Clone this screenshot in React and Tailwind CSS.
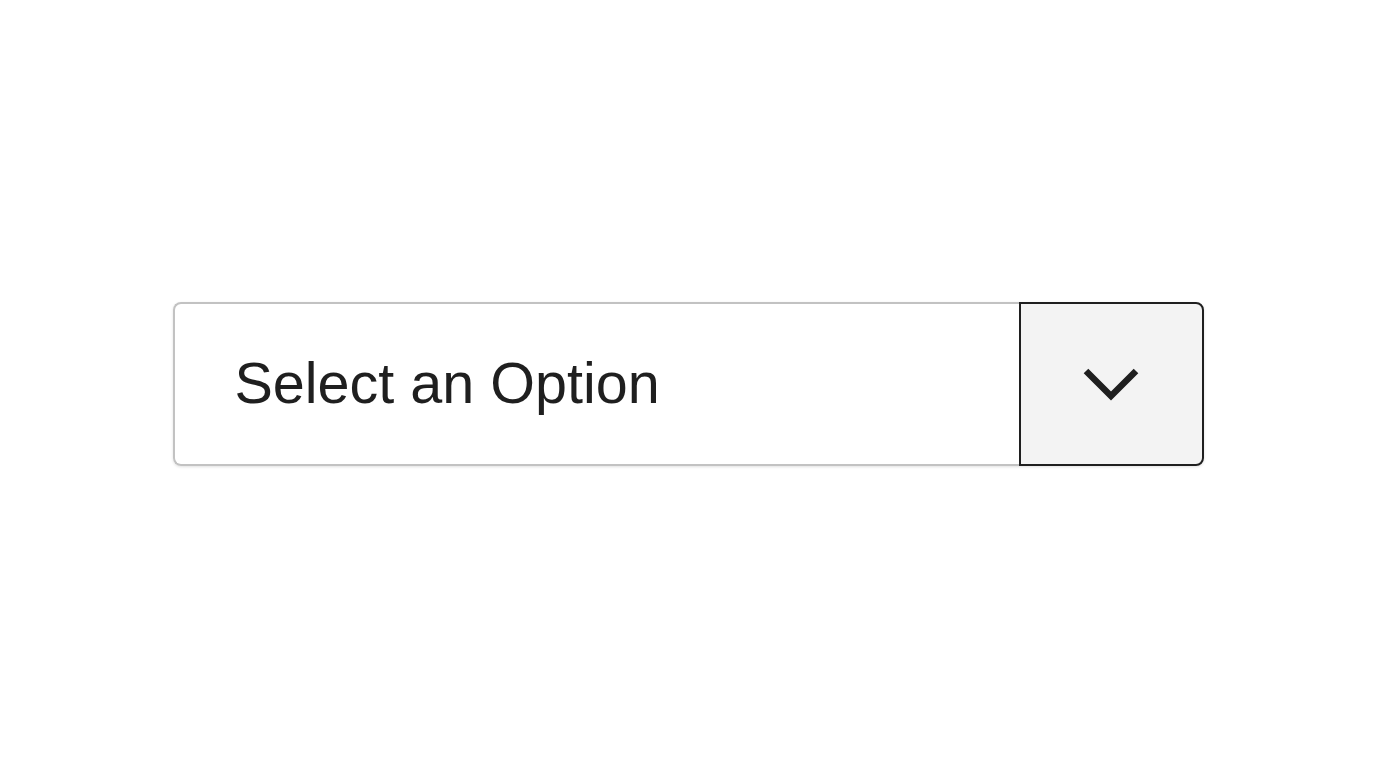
import React from 'react';

export default function App() {
  return (
    <div className="w-full h-screen bg-white flex items-center justify-center">
      {/* Select box */}
      <div className="flex w-[1031px] h-[164px] rounded-[8px] shadow-[0_1px_3px_rgba(0,0,0,0.12)]">
        <div className="flex-1 flex items-center pl-[60px] bg-white border-2 border-r-0 border-[#c2c2c2] rounded-l-[8px]">
          <span
            className="text-[57.5px] leading-none text-[#1f1f1f]"
            style={{ fontFamily: '"Liberation Sans", Arial, sans-serif' }}
          >
            Select an Option
          </span>
        </div>
        <div className="w-[185px] flex items-center justify-center bg-[#f3f3f3] border-2 border-[#1f1f1f] rounded-r-[8px]">
          <svg width="56" height="34" viewBox="0 0 56 34" fill="none">
            <polyline
              points="3,4 28,29 53,4"
              stroke="#1f1f1f"
              strokeWidth="6.5"
              strokeLinecap="butt"
              strokeLinejoin="miter"
            />
          </svg>
        </div>
      </div>
    </div>
  );
}
